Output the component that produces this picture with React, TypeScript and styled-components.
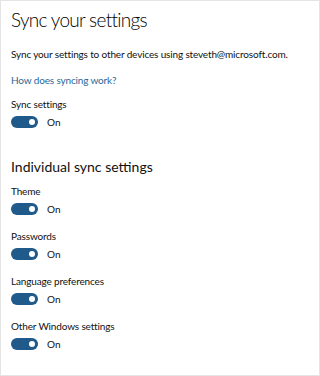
import React from 'react';
import styled, { createGlobalStyle } from 'styled-components';

const GlobalStyle = createGlobalStyle`
  html, body { margin: 0; padding: 0; background: #ffffff; }
  body { font-family: Lato, "Noto Sans", sans-serif; color: #111111; }
`;

const Page = styled.div`
  box-sizing: border-box;
  width: 320px;
  height: 376px;
  border: 1px solid #e4e4e4;
  padding: 5px 10px 0 10px;
  background: #ffffff;
`;

const Title = styled.h1`
  margin: 0;
  font-size: 19px;
  font-weight: 300;
  letter-spacing: -0.7px;
  line-height: 28px;
  color: #000000;
`;

const Description = styled.p`
  margin: 13px 0 0 0;
  font-size: 10px;
  letter-spacing: -0.15px;
  line-height: 15px;
  white-space: nowrap;
`;

const HelpLink = styled.a`
  display: block;
  margin-top: 11px;
  font-size: 10px;
  letter-spacing: -0.15px;
  line-height: 15px;
  color: #2a6797;
  text-decoration: none;
`;

const SectionHeading = styled.h2`
  margin: 29px 0 0 0;
  font-size: 14px;
  font-weight: 400;
  line-height: 20px;
  color: #111111;
`;

const Setting = styled.div<{ $gap: number }>`
  margin-top: ${(p) => p.$gap}px;
`;

const Label = styled.div`
  font-size: 10px;
  letter-spacing: -0.15px;
  line-height: 15px;
`;

const ToggleRow = styled.div`
  display: flex;
  align-items: center;
  gap: 9px;
  margin-top: 4px;
  height: 12px;
`;

const Track = styled.span<{ $on: boolean }>`
  box-sizing: border-box;
  position: relative;
  width: 27px;
  height: 12px;
  border-radius: 6px;
  background: ${(p) => (p.$on ? '#1f5a8a' : '#ffffff')};
  border: ${(p) => (p.$on ? 'none' : '1px solid #333')};
`;

const Knob = styled.span<{ $on: boolean }>`
  position: absolute;
  top: 3px;
  left: ${(p) => (p.$on ? '18px' : '3px')};
  width: 6px;
  height: 6px;
  border-radius: 50%;
  background: ${(p) => (p.$on ? '#ffffff' : '#333')};
`;

const State = styled.span`
  font-size: 10px;
  line-height: 12px;
`;

const Toggle = ({ on }: { on: boolean }) => (
  <ToggleRow>
    <Track $on={on}>
      <Knob $on={on} />
    </Track>
    <State>{on ? 'On' : 'Off'}</State>
  </ToggleRow>
);

const individual = ['Theme', 'Passwords', 'Language preferences', 'Other Windows settings'];

export default function App() {
  return (
    <>
      <GlobalStyle />
      <Page>
        <Title>Sync your settings</Title>
        <Description>Sync your settings to other devices using steveth@microsoft.com.</Description>
        <HelpLink href="#">How does syncing work?</HelpLink>
        <Setting $gap={9}>
          <Label>Sync settings</Label>
          <Toggle on />
        </Setting>
        <SectionHeading>Individual sync settings</SectionHeading>
        {individual.map((name, i) => (
          <Setting key={name} $gap={i === 0 ? 7 : 14}>
            <Label>{name}</Label>
            <Toggle on />
          </Setting>
        ))}
      </Page>
    </>
  );
}
